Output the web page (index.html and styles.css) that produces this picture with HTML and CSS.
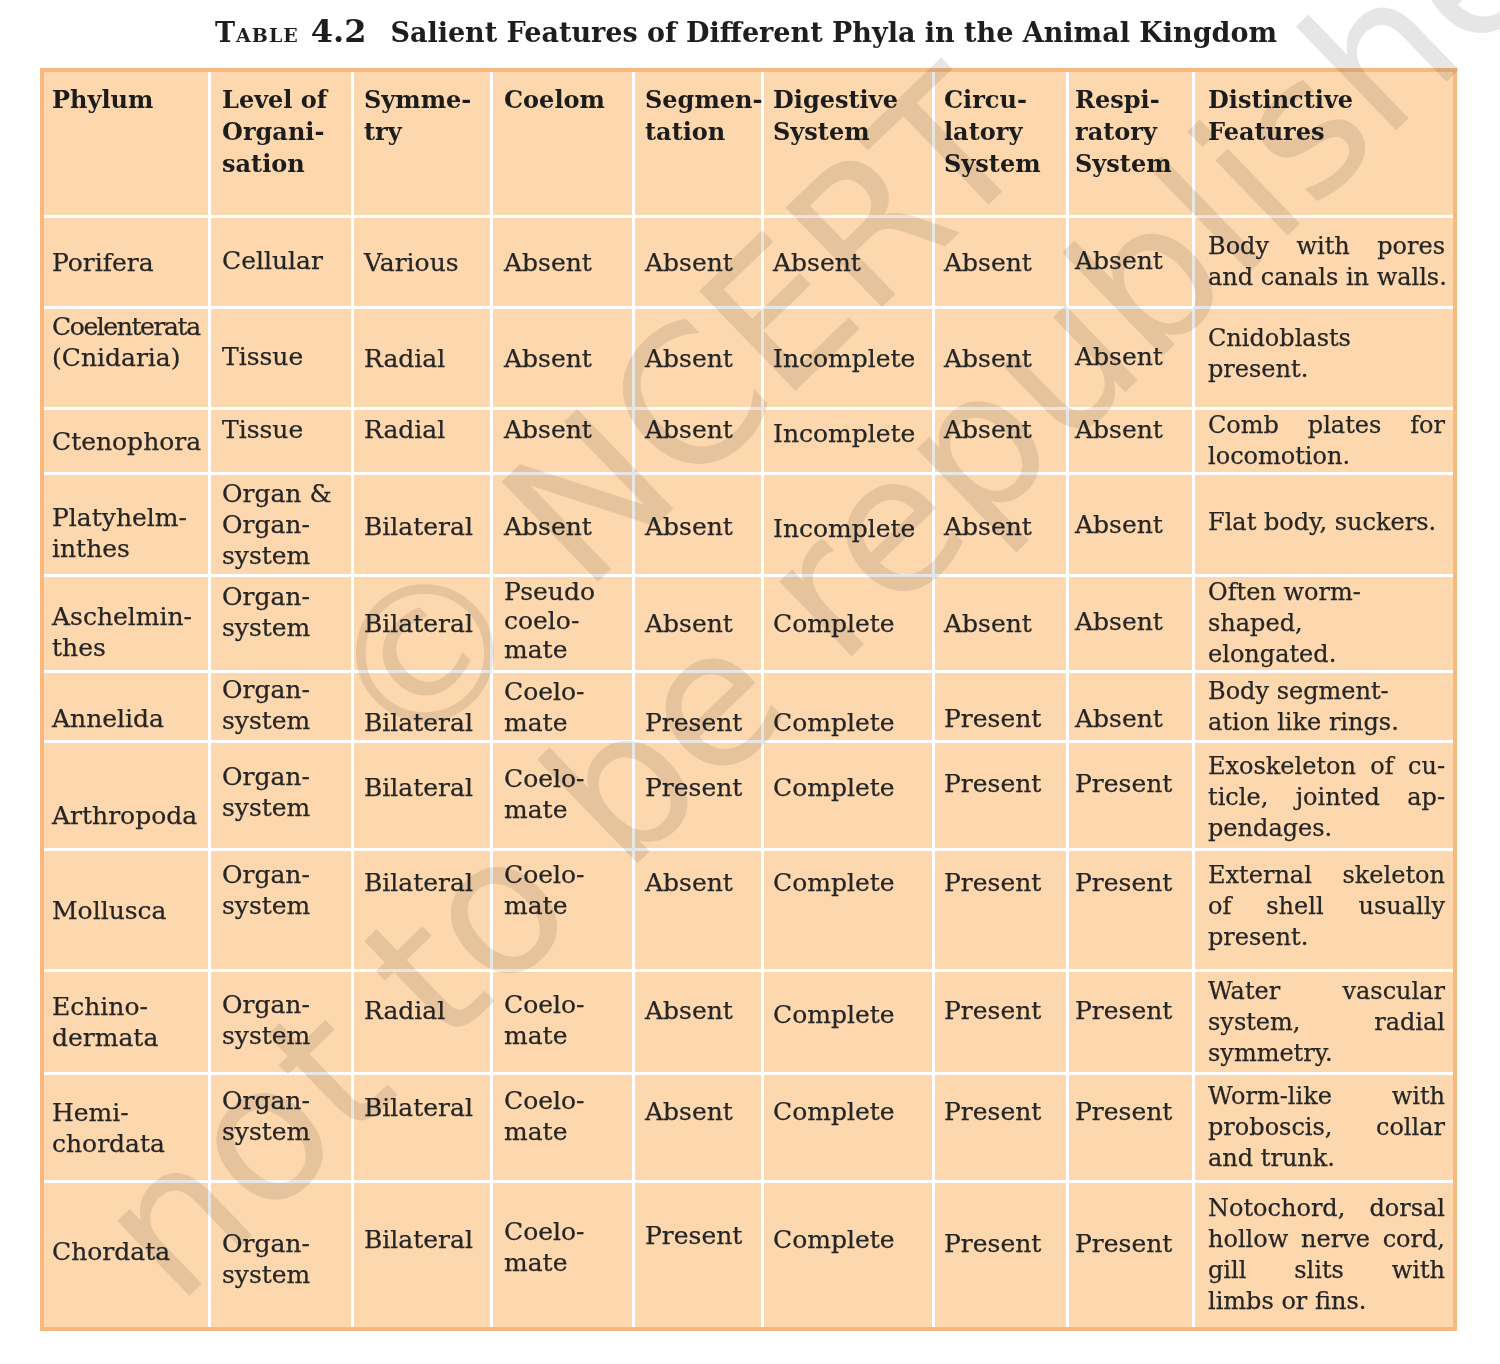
FILE: index.html
```html
<!DOCTYPE html>
<html lang="en">
<head>
<meta charset="utf-8">
<title>Table 4.2 Salient Features of Different Phyla in the Animal Kingdom</title>
<link rel="stylesheet" href="styles.css">
</head>
<body>
<div class="page">
  <h1 class="title"><span class="tlabel">Table</span><span class="tnum">4.2</span>Salient Features of Different Phyla in the Animal Kingdom</h1>
  <table class="phyla">
    <colgroup>
      <col class="w1"><col class="w2"><col class="w3"><col class="w4"><col class="w5"><col class="w6"><col class="w7"><col class="w8"><col class="w9">
    </colgroup>
    <thead>
      <tr class="h-head">
        <th>Phylum</th>
        <th>Level of<br>Organi-<br>sation</th>
        <th>Symme-<br>try</th>
        <th>Coelom</th>
        <th>Segmen-<br>tation</th>
        <th>Digestive<br>System</th>
        <th>Circu-<br>latory<br>System</th>
        <th>Respi-<br>ratory<br>System</th>
        <th>Distinctive<br>Features</th>
      </tr>
    </thead>
    <tbody>
      <tr class="h-por">
        <td>Porifera</td>
        <td class="u2">Cellular</td>
        <td>Various</td>
        <td>Absent</td>
        <td>Absent</td>
        <td>Absent</td>
        <td>Absent</td>
        <td class="u2">Absent</td>
        <td><span class="ln j">Body with pores</span><span class="ln">and canals in walls.</span></td>
      </tr>
      <tr class="h-coe">
        <td class="u16"><span class="squeeze">Coelenterata</span><br>(Cnidaria)</td>
        <td class="u2">Tissue</td>
        <td>Radial</td>
        <td>Absent</td>
        <td>Absent</td>
        <td>Incomplete</td>
        <td>Absent</td>
        <td class="u2">Absent</td>
        <td class="u4"><span class="ln">Cnidoblasts</span><span class="ln">present.</span></td>
      </tr>
      <tr class="h-cte">
        <td>Ctenophora</td>
        <td class="u12">Tissue</td>
        <td class="u12">Radial</td>
        <td class="u12">Absent</td>
        <td class="u12">Absent</td>
        <td class="u8">Incomplete</td>
        <td class="u12">Absent</td>
        <td class="u12">Absent</td>
        <td><span class="ln j">Comb plates for</span><span class="ln">locomotion.</span></td>
      </tr>
      <tr class="h-pla">
        <td class="d8">Platyhelm-<br>inthes</td>
        <td>Organ &amp;<br>Organ-<br>system</td>
        <td class="d2">Bilateral</td>
        <td class="d2">Absent</td>
        <td class="d2">Absent</td>
        <td class="d4">Incomplete</td>
        <td class="d2">Absent</td>
        <td>Absent</td>
        <td class="u2"><span class="ln">Flat body, suckers.</span></td>
      </tr>
      <tr class="h-asc">
        <td class="d8">Aschelmin-<br>thes</td>
        <td class="u12">Organ-<br>system</td>
        <td>Bilateral</td>
        <td class="u3 tight">Pseudo<br>coelo-<br>mate</td>
        <td>Absent</td>
        <td>Complete</td>
        <td>Absent</td>
        <td class="u2">Absent</td>
        <td><span class="ln">Often worm-</span><span class="ln">shaped,</span><span class="ln">elongated.</span></td>
      </tr>
      <tr class="h-ann">
        <td class="d12">Annelida</td>
        <td class="u2">Organ-<br>system</td>
        <td class="d16">Bilateral</td>
        <td>Coelo-<br>mate</td>
        <td class="d16">Present</td>
        <td class="d16">Complete</td>
        <td class="d12">Present</td>
        <td class="d12">Absent</td>
        <td><span class="ln">Body segment-</span><span class="ln">ation like rings.</span></td>
      </tr>
      <tr class="h-art">
        <td class="d20">Arthropoda</td>
        <td class="u4">Organ-<br>system</td>
        <td class="u8">Bilateral</td>
        <td class="u2">Coelo-<br>mate</td>
        <td class="u8">Present</td>
        <td class="u8">Complete</td>
        <td class="u12">Present</td>
        <td class="u12">Present</td>
        <td class="d2"><span class="ln j">Exoskeleton of cu-</span><span class="ln j">ticle, jointed ap-</span><span class="ln">pendages.</span></td>
      </tr>
      <tr class="h-mol">
        <td>Mollusca</td>
        <td class="u20">Organ-<br>system</td>
        <td class="u28">Bilateral</td>
        <td class="u20">Coelo-<br>mate</td>
        <td class="u28">Absent</td>
        <td class="u28">Complete</td>
        <td class="u28">Present</td>
        <td class="u28">Present</td>
        <td class="u4"><span class="ln j">External skeleton</span><span class="ln j">of shell usually</span><span class="ln">present.</span></td>
      </tr>
      <tr class="h-ech">
        <td>Echino-<br>dermata</td>
        <td class="u2">Organ-<br>system</td>
        <td class="u12">Radial</td>
        <td class="u2">Coelo-<br>mate</td>
        <td class="u12">Absent</td>
        <td class="u8">Complete</td>
        <td class="u12">Present</td>
        <td class="u12">Present</td>
        <td><span class="ln j">Water vascular</span><span class="ln j">system, radial</span><span class="ln">symmetry.</span></td>
      </tr>
      <tr class="h-hem">
        <td>Hemi-<br>chordata</td>
        <td class="u12">Organ-<br>system</td>
        <td class="u20">Bilateral</td>
        <td class="u12">Coelo-<br>mate</td>
        <td class="u16">Absent</td>
        <td class="u16">Complete</td>
        <td class="u16">Present</td>
        <td class="u16">Present</td>
        <td><span class="ln j">Worm-like with</span><span class="ln j">proboscis, collar</span><span class="ln">and trunk.</span></td>
      </tr>
      <tr class="h-cho">
        <td class="u4">Chordata</td>
        <td class="d4">Organ-<br>system</td>
        <td class="u16">Bilateral</td>
        <td class="u8">Coelo-<br>mate</td>
        <td class="u20">Present</td>
        <td class="u16">Complete</td>
        <td class="u12">Present</td>
        <td class="u12">Present</td>
        <td><span class="ln j">Notochord, dorsal</span><span class="ln j">hollow nerve cord,</span><span class="ln j">gill slits with</span><span class="ln">limbs or fins.</span></td>
      </tr>
    </tbody>
  </table>
  <div class="watermark" aria-hidden="true">
    <span class="wm-line">© NCERT</span>
    <span class="wm-line wm-second">not to be republished</span>
  </div>
</div>
</body>
</html>
```

FILE: styles.css
```css
html, body {
  margin: 0;
  padding: 0;
  background: #ffffff;
}

body {
  font-family: "DejaVu Serif", "Liberation Serif", serif;
  color: #252525;
}

.page {
  position: relative;
  width: 1500px;
  height: 1364px;
  overflow: hidden;
  background: #ffffff;
}

/* ---------- title ---------- */
.title {
  margin: 0;
  height: 68px;
  box-sizing: border-box;
  padding: 10px 8px 0 0;
  text-align: center;
  font-size: 27px;
  line-height: 42px;
  font-weight: bold;
  color: #1e1e1e;
  white-space: nowrap;
}

.tlabel {
  font-variant: small-caps;
  letter-spacing: 1px;
}

.tnum {
  font-size: 32px;
  margin: 0 24px 0 12px;
}

/* ---------- table ---------- */
.phyla {
  margin-left: 40px;
  width: 1417px;
  border: 4px solid #f7b97f;
  border-collapse: separate;
  border-spacing: 0;
  table-layout: fixed;
  background: #fdd8ae;
  font-size: 25px;
  line-height: 31px;
}

.w1 { width: 167px; }
.w2 { width: 143px; }
.w3 { width: 139px; }
.w4 { width: 142px; }
.w5 { width: 129px; }
.w6 { width: 171px; }
.w7 { width: 134px; }
.w8 { width: 126px; }
.w9 { width: 258px; }

.phyla th,
.phyla td {
  border-right: 3px solid #ffffff;
  border-bottom: 3px solid #ffffff;
  padding: 0 4px 0 10px;
  vertical-align: middle;
  white-space: nowrap;
  text-align: left;
  overflow: visible;
}

.phyla td {
  -webkit-text-stroke: 0.25px #252525;
}

.phyla th:last-child,
.phyla td:last-child {
  border-right: 0;
  padding-right: 8px;
}

.phyla td:last-child {
  font-size: 24px;
}

.phyla tbody tr:last-child td {
  border-bottom: 0;
}

.phyla th {
  vertical-align: top;
  padding-top: 12px;
  font-size: 24px;
  font-weight: bold;
  line-height: 32px;
  color: #1c1c1c;
}

.phyla th:nth-child(1), .phyla td:nth-child(1) { padding-left: 8px; }
.phyla th:nth-child(2), .phyla td:nth-child(2) { padding-left: 11px; }
.phyla th:nth-child(3), .phyla td:nth-child(3) { padding-left: 10px; }
.phyla th:nth-child(4), .phyla td:nth-child(4) { padding-left: 11px; }
.phyla th:nth-child(5), .phyla td:nth-child(5) { padding-left: 10px; }
.phyla th:nth-child(6), .phyla td:nth-child(6) { padding-left: 9px; }
.phyla th:nth-child(7), .phyla td:nth-child(7) { padding-left: 9px; }
.phyla th:nth-child(8), .phyla td:nth-child(8) { padding-left: 6px; }
.phyla th:nth-child(9), .phyla td:nth-child(9) { padding-left: 13px; }

/* row heights */
.h-head { height: 146px; }
.h-por  { height: 91px; }
.h-coe  { height: 101px; }
.h-cte  { height: 64px; }
.h-pla  { height: 102px; }
.h-asc  { height: 96px; }
.h-ann  { height: 70px; }
.h-art  { height: 108px; }
.h-mol  { height: 121px; }
.h-ech  { height: 103px; }
.h-hem  { height: 108px; }
.h-cho  { height: 144px; }

/* vertical nudges inside middle-aligned cells */
.phyla td.u2  { padding-bottom: 4px; }
.phyla td.u3  { padding-bottom: 6px; }
.phyla td.u4  { padding-bottom: 8px; }
.phyla td.u8  { padding-bottom: 16px; }
.phyla td.u12 { padding-bottom: 24px; }
.phyla td.u16 { padding-bottom: 32px; }
.phyla td.u20 { padding-bottom: 40px; }
.phyla td.u24 { padding-bottom: 48px; }
.phyla td.u28 { padding-bottom: 56px; }
.phyla td.d2  { padding-top: 4px; }
.phyla td.d4  { padding-top: 8px; }
.phyla td.d8  { padding-top: 16px; }
.phyla td.d12 { padding-top: 24px; }
.phyla td.d16 { padding-top: 32px; }
.phyla td.d20 { padding-top: 40px; }

.tight { line-height: 29px; }

.squeeze { letter-spacing: -1.4px; }

.ln {
  display: block;
}

.ln.j {
  text-align: justify;
  text-align-last: justify;
}

/* ---------- watermark ---------- */
.watermark {
  position: absolute;
  left: -362px;
  top: 301px;
  width: 2200px;
  height: 360px;
  transform: rotate(-44deg);
  transform-origin: 50% 50%;
  font-family: "DejaVu Sans", "Liberation Sans", sans-serif;
  font-size: 190px;
  line-height: 180px;
  text-align: center;
  color: #e6e6e6;
  mix-blend-mode: multiply;
  pointer-events: none;
  white-space: nowrap;
}

.wm-line {
  display: block;
}

.wm-second {
  margin-top: 50px;
  padding-left: 80px;
}
```
